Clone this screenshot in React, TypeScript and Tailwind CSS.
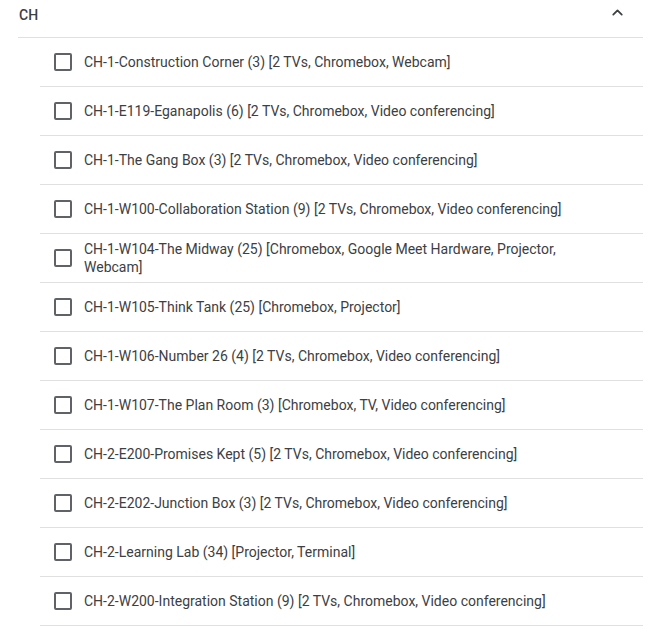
import { ChevronUp } from "lucide-react";

const rooms = [
    "CH-1-Construction Corner (3) [2 TVs, Chromebox, Webcam]",
    "CH-1-E119-Eganapolis (6) [2 TVs, Chromebox, Video conferencing]",
    "CH-1-The Gang Box (3) [2 TVs, Chromebox, Video conferencing]",
    "CH-1-W100-Collaboration Station (9) [2 TVs, Chromebox, Video conferencing]",
    "CH-1-W104-The Midway (25) [Chromebox, Google Meet Hardware, Projector, Webcam]",
    "CH-1-W105-Think Tank (25) [Chromebox, Projector]",
    "CH-1-W106-Number 26 (4) [2 TVs, Chromebox, Video conferencing]",
    "CH-1-W107-The Plan Room (3) [Chromebox, TV, Video conferencing]",
    "CH-2-E200-Promises Kept (5) [2 TVs, Chromebox, Video conferencing]",
    "CH-2-E202-Junction Box (3) [2 TVs, Chromebox, Video conferencing]",
    "CH-2-Learning Lab (34) [Projector, Terminal]",
    "CH-2-W200-Integration Station (9) [2 TVs, Chromebox, Video conferencing]",
];

const App = () => {
    return (
        <div className="w-[671px] h-[633px] overflow-hidden bg-white font-['Roboto',sans-serif] text-[14px] text-[#3c4043]">
            <div className="ml-[18px] mr-[28px]">
                <div className="h-[38px] flex items-start justify-between border-b border-[#e0e0e0] pt-[5px]">
                    <span className="ml-[1px] font-medium text-[#3c4043]">CH</span>
                    <ChevronUp className="w-[17px] h-[17px] mr-[17px] mt-[-1px] text-[#3c4043]" strokeWidth={2.5} />
                </div>
                <div className="ml-[22px]">
                    {rooms.map((room) => (
                        <label
                            key={room}
                            className="h-[49px] flex items-center border-b border-[#e0e0e0] pl-[14px] pr-[40px]"
                        >
                            <span className="shrink-0 w-[18px] h-[18px] border-2 border-[#5f6368] rounded-[2px]" />
                            <span className="ml-[12px] leading-[18px]">{room}</span>
                        </label>
                    ))}
                </div>
            </div>
        </div>
    );
};

export default App;
